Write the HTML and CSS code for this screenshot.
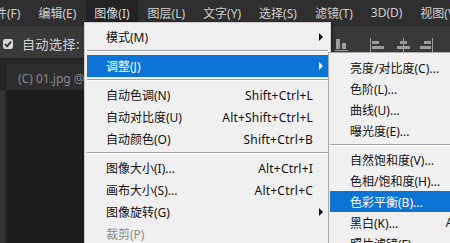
FILE: index.html
```html
<!DOCTYPE html>
<html lang="zh-CN">
<head>
<meta charset="utf-8">
<title>Photoshop 图像菜单</title>
<link rel="stylesheet" href="styles.css">
</head>
<body>
<div class="app">
  <div class="menubar">
    <span class="mi first">文件(F)</span>
    <span class="mi">编辑(E)</span>
    <span class="mi active">图像(I)</span>
    <span class="mi">图层(L)</span>
    <span class="mi">文字(Y)</span>
    <span class="mi">选择(S)</span>
    <span class="mi">滤镜(T)</span>
    <span class="mi">3D(D)</span>
    <span class="mi">视图(V)</span>
  </div>
  <div class="optbar">
    <span class="check">
      <svg width="8" height="8" viewBox="0 0 8 8"><path d="M1 4.2 L3.2 6.3 L7 1.6" fill="none" stroke="#2a2a2a" stroke-width="1.7"/></svg>
    </span>
    <span class="optlabel">自动选择:</span>
    <div class="aligns">
      <svg class="ai" width="13" height="14" viewBox="0 0 13 14"><rect x="1" y="1" width="4" height="10" fill="#9c9c9c"/><rect x="7" y="5" width="4" height="6" fill="#9c9c9c"/><rect x="0" y="12" width="13" height="1" fill="#9c9c9c"/></svg>
      <svg class="ai" width="14" height="14" viewBox="0 0 14 14"><rect x="0" y="0" width="1" height="14" fill="#9c9c9c"/><rect x="2" y="3" width="7" height="3" fill="#9c9c9c"/><rect x="2" y="8" width="12" height="3" fill="#9c9c9c"/></svg>
      <svg class="ai" width="13" height="14" viewBox="0 0 13 14"><rect x="6" y="0" width="1" height="14" fill="#9c9c9c"/><rect x="3" y="3" width="7" height="3" fill="#9c9c9c"/><rect x="0" y="8" width="13" height="3" fill="#9c9c9c"/></svg>
      <svg class="ai" width="13" height="14" viewBox="0 0 13 14"><rect x="12" y="0" width="1" height="14" fill="#9c9c9c"/><rect x="4" y="3" width="7" height="3" fill="#9c9c9c"/><rect x="0" y="8" width="11" height="3" fill="#9c9c9c"/></svg>
    </div>
  </div>
  <div class="tabbar">
    <span class="tab">(C) 01.jpg @ 66.7%(RGB/8)</span>
  </div>
  <div class="work">
    <div class="strip"></div>
    <div class="canvas"></div>
  </div>

  <div class="menu main">
    <div class="item"><span class="label">模式(M)</span><span class="sc"></span><span class="arr"><i class="tri"></i></span></div>
    <div class="sep"></div>
    <div class="item hl"><span class="label">调整(J)</span><span class="sc"></span><span class="arr"><i class="tri"></i></span></div>
    <div class="sep"></div>
    <div class="item"><span class="label">自动色调(N)</span><span class="sc">Shift+Ctrl+L</span><span class="arr"></span></div>
    <div class="item"><span class="label">自动对比度(U)</span><span class="sc">Alt+Shift+Ctrl+L</span><span class="arr"></span></div>
    <div class="item"><span class="label">自动颜色(O)</span><span class="sc">Shift+Ctrl+B</span><span class="arr"></span></div>
    <div class="sep"></div>
    <div class="item"><span class="label">图像大小(I)...</span><span class="sc">Alt+Ctrl+I</span><span class="arr"></span></div>
    <div class="item"><span class="label">画布大小(S)...</span><span class="sc">Alt+Ctrl+C</span><span class="arr"></span></div>
    <div class="item"><span class="label">图像旋转(G)</span><span class="sc"></span><span class="arr"><i class="tri"></i></span></div>
    <div class="item dis"><span class="label">裁剪(P)</span><span class="sc"></span><span class="arr"></span></div>
  </div>

  <div class="menu sub">
    <div class="item"><span class="label">亮度/对比度(C)...</span><span class="sc"></span></div>
    <div class="item"><span class="label">色阶(L)...</span><span class="sc">Ctrl+L</span></div>
    <div class="item"><span class="label">曲线(U)...</span><span class="sc">Ctrl+M</span></div>
    <div class="item"><span class="label">曝光度(E)...</span><span class="sc"></span></div>
    <div class="sep"></div>
    <div class="item"><span class="label">自然饱和度(V)...</span><span class="sc"></span></div>
    <div class="item"><span class="label">色相/饱和度(H)...</span><span class="sc">Ctrl+U</span></div>
    <div class="item hl"><span class="label">色彩平衡(B)...</span><span class="sc">Ctrl+B</span></div>
    <div class="item"><span class="label">黑白(K)...</span><span class="sc">Alt+Shift+Ctrl+B</span></div>
    <div class="item"><span class="label">照片滤镜(F)...</span><span class="sc"></span></div>
  </div>
</div>
</body>
</html>
```
FILE: styles.css
```css
html, body {
  margin: 0;
  padding: 0;
  width: 450px;
  height: 243px;
  overflow: hidden;
  background: #1d1d1d;
}

.app {
  position: relative;
  width: 450px;
  height: 243px;
  overflow: hidden;
  font-family: "Noto Sans", "Noto Sans CJK SC", sans-serif;
  font-size: 12px;
  display: flex;
  flex-direction: column;
}

/* top menu bar */
.menubar {
  height: 25px;
  flex: none;
  background: #2f2f2f;
  display: flex;
  align-items: flex-start;
  color: #cfcfcf;
  white-space: nowrap;
}
.mi {
  flex: none;
  height: 22px;
  box-sizing: border-box;
  padding: 3px 8px 0;
  display: flex;
  align-items: center;
  margin-right: 2px;
}
.mi.first {
  margin-left: -25px;
}
.mi.active {
  background: #232323;
  color: #d8d8d8;
}

/* options bar */
.optbar {
  height: 33px;
  flex: none;
  box-sizing: border-box;
  background: #393939;
  border-top: 1px solid #2a2a2a;
  display: flex;
  align-items: center;
  padding: 3px 0 0 3px;
  color: #d2d2d2;
  font-size: 13px;
  white-space: nowrap;
}
.check {
  flex: none;
  width: 10px;
  height: 10px;
  border-radius: 2px;
  background: #d6d6d6;
  display: flex;
  align-items: center;
  justify-content: center;
  margin-right: 9px;
}
.optlabel {
  flex: none;
  letter-spacing: 0.5px;
}
.aligns {
  flex: none;
  margin-left: 255px;
  margin-top: 2px;
  display: flex;
  align-items: center;
}
.ai {
  flex: none;
}
.ai:nth-child(1) { margin-right: 22px; }
.ai:nth-child(2) { margin-right: 13px; }
.ai:nth-child(3) { margin-right: 10px; }

/* document tabs */
.tabbar {
  height: 32px;
  flex: none;
  box-sizing: border-box;
  background: #262626;
  border-top: 1px solid #1e1e1e;
  display: flex;
  align-items: flex-end;
  padding-left: 7px;
}
.tab {
  height: 26px;
  display: flex;
  align-items: center;
  padding: 2px 10px 0 11px;
  box-sizing: border-box;
  background: #2d2d2d;
  color: #888888;
  font-size: 12px;
  white-space: nowrap;
}

/* work area */
.work {
  flex: 1;
  display: flex;
}
.strip {
  width: 5px;
  background: #333333;
  border-right: 2px solid #242424;
}
.canvas {
  flex: 1;
  background: #1d1d1d;
}

/* menus */
.menu {
  position: absolute;
  background: #f0f0f0;
  color: #111111;
  font-size: 12px;
  white-space: nowrap;
  box-sizing: border-box;
}
.menu.main {
  left: 84px;
  top: 22px;
  width: 247px;
  height: 240px;
  border: 1px solid #cfcfcf;
  padding-top: 3px;
  box-shadow: 2px 2px 3px rgba(0, 0, 0, 0.35);
  z-index: 1;
}
.menu.sub {
  left: 328px;
  top: 52px;
  width: 232px;
  height: 210px;
  border: 1px solid #a9a9a9;
  padding-top: 4px;
  z-index: 2;
}

.item {
  display: flex;
  align-items: center;
  height: 22px;
}
.main .item {
  margin: 0 2px;
  padding-left: 19px;
}
.sub .item {
  height: 21px;
  margin-left: 1px;
  padding-left: 20px;
  padding-right: 21px;
}
.label {
  flex: 1;
}
.sc {
  text-align: right;
  letter-spacing: 0.2px;
}
.arr {
  width: 15px;
  flex: none;
  height: 100%;
  display: flex;
  align-items: center;
}
.tri {
  display: block;
  margin-left: 6px;
  width: 0;
  height: 0;
  border-left: 4px solid #111111;
  border-top: 4px solid transparent;
  border-bottom: 4px solid transparent;
}
.item.hl {
  background: #0b74d5;
  color: #ffffff;
}
.item.hl .tri {
  border-left-color: #ffffff;
}
.item.dis {
  color: #8d8d8d;
}

.sep {
  height: 7px;
  box-sizing: border-box;
  padding-top: 2px;
  margin: 0 2px;
}
.sep::before {
  content: "";
  display: block;
  height: 1px;
  background: #a0a0a0;
  border-bottom: 1px solid #ffffff;
}
.sub .sep {
  height: 8px;
  padding-top: 3px;
  margin: 0 1px 0 1px;
}
```
